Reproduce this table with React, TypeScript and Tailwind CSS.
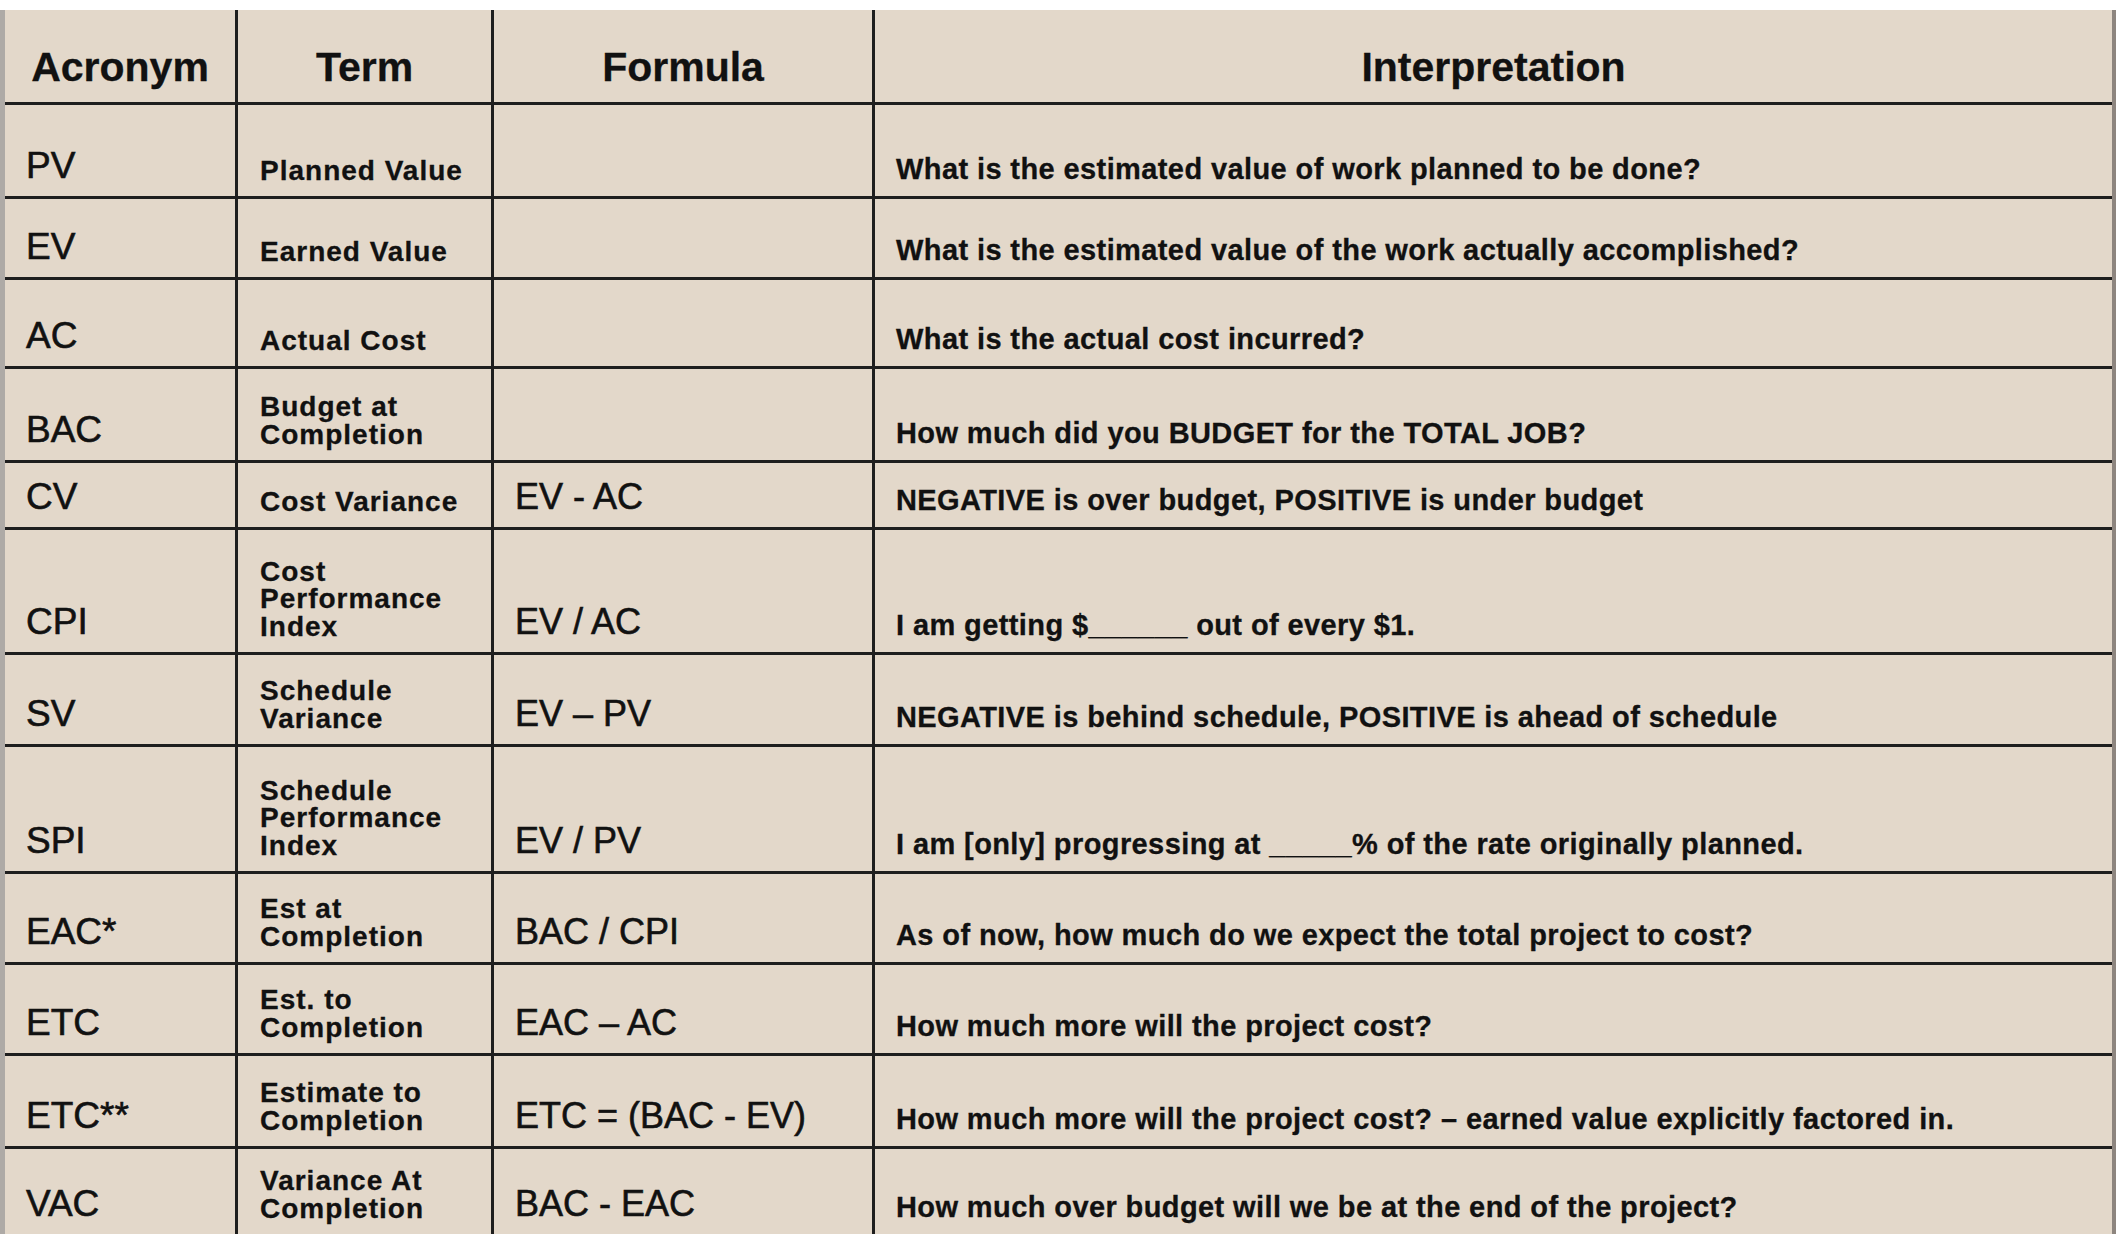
import React from "react";

type Row = {
  h: string;
  acr: string;
  term: string[];
  formula: string;
  interp: React.ReactNode;
  last?: boolean;
};

const rows: Row[] = [
  {
    h: "h-[94px]",
    acr: "PV",
    term: ["Planned Value"],
    formula: "",
    interp: <>What is the estimated value of work planned to be done?</>,
  },
  {
    h: "h-[81px]",
    acr: "EV",
    term: ["Earned Value"],
    formula: "",
    interp: <>What is the estimated value of the work actually accomplished?</>,
  },
  {
    h: "h-[89px]",
    acr: "AC",
    term: ["Actual Cost"],
    formula: "",
    interp: <>What is the actual cost incurred?</>,
  },
  {
    h: "h-[94px]",
    acr: "BAC",
    term: ["Budget at", "Completion"],
    formula: "",
    interp: (
      <>
        How much did you <b className="font-black">BUDGET</b> for the{" "}
        <b className="font-black">TOTAL JOB</b>?
      </>
    ),
  },
  {
    h: "h-[67px]",
    acr: "CV",
    term: ["Cost Variance"],
    formula: "EV - AC",
    interp: (
      <>
        <b className="font-black">NEGATIVE</b> is over budget,{" "}
        <b className="font-black">POSITIVE</b> is under budget
      </>
    ),
  },
  {
    h: "h-[125px]",
    acr: "CPI",
    term: ["Cost", "Performance", "Index"],
    formula: "EV / AC",
    interp: <>I am getting $______ out of every $1.</>,
  },
  {
    h: "h-[92px]",
    acr: "SV",
    term: ["Schedule", "Variance"],
    formula: "EV – PV",
    interp: (
      <>
        <b className="font-black">NEGATIVE</b> is behind schedule,{" "}
        <b className="font-black">POSITIVE</b> is ahead of schedule
      </>
    ),
  },
  {
    h: "h-[127px]",
    acr: "SPI",
    term: ["Schedule", "Performance", "Index"],
    formula: "EV / PV",
    interp: <>I am [only] progressing at _____% of the rate originally planned.</>,
  },
  {
    h: "h-[91px]",
    acr: "EAC*",
    term: ["Est at", "Completion"],
    formula: "BAC / CPI",
    interp: <>As of now, how much do we expect the total project to cost?</>,
  },
  {
    h: "h-[91px]",
    acr: "ETC",
    term: ["Est. to", "Completion"],
    formula: "EAC – AC",
    interp: <>How much more will the project cost?</>,
  },
  {
    h: "h-[93px]",
    acr: "ETC**",
    term: ["Estimate to", "Completion"],
    formula: "ETC = (BAC - EV)",
    interp: (
      <>How much more will the project cost? – earned value explicitly factored in.</>
    ),
  },
  {
    h: "h-[85px]",
    acr: "VAC",
    term: ["Variance At", "Completion"],
    formula: "BAC - EAC",
    interp: <>How much over budget will we be at the end of the project?</>,
    last: true,
  },
];

const cellBase = "flex items-end border-r-[3px] border-r-[#1e1e1e]";

export default function App() {
  return (
    <div className="w-[2120px] h-[1242px] bg-white pt-[10px] font-['Liberation_Sans',Arial,sans-serif] text-[#111] overflow-hidden">
      <div className="w-[2116px] bg-[#e3d8ca] border-l-[5px] border-l-[#aeaaa6] border-r-[4px] border-r-[#8d857f]">
        {/* Header */}
        <div className="grid grid-cols-[233px_256px_381px_1fr] h-[95px] border-b-[3px] border-b-[#1e1e1e] text-[41px] font-bold leading-none [-webkit-text-stroke:0.3px_#111]">
          <div className={`${cellBase} justify-center pb-[14px]`}>Acronym</div>
          <div className={`${cellBase} justify-center pb-[14px]`}>Term</div>
          <div className={`${cellBase} justify-center pb-[14px]`}>Formula</div>
          <div className="flex items-end justify-center pb-[14px]">Interpretation</div>
        </div>
        {rows.map((r) => (
          <div
            key={r.acr}
            className={`grid grid-cols-[233px_256px_381px_1fr] ${r.h} ${
              r.last ? "" : "border-b-[3px] border-b-[#1e1e1e]"
            }`}
          >
            <div
              className={`${cellBase} pl-[21px] pb-[12px] text-[37px] leading-none [-webkit-text-stroke:0.6px_#111]`}
            >
              {r.acr}
            </div>
            <div className={`${cellBase} pl-[22px] pb-[12px]`}>
              <div className="text-[28px] font-bold leading-[27.5px] tracking-[1px] [-webkit-text-stroke:0.3px_#111]">
                {r.term.map((t) => (
                  <div key={t} className="whitespace-nowrap">
                    {t}
                  </div>
                ))}
              </div>
            </div>
            <div
              className={`${cellBase} pl-[21px] pb-[12px] text-[36px] leading-none whitespace-nowrap [-webkit-text-stroke:0.6px_#111]`}
            >
              {r.formula}
            </div>
            <div className="flex items-end pl-[21px] pb-[12px] text-[29px] font-bold leading-none tracking-[0.4px] whitespace-nowrap [-webkit-text-stroke:0.3px_#111]">
              <span>{r.interp}</span>
            </div>
          </div>
        ))}
      </div>
    </div>
  );
}
